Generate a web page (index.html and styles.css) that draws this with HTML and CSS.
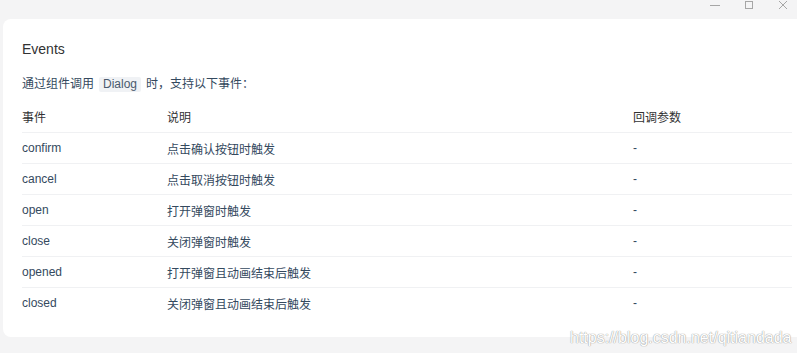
FILE: index.html
```html
<!DOCTYPE html>
<html lang="zh-CN">
<head>
<meta charset="utf-8">
<link rel="stylesheet" href="styles.css">
</head>
<body>
<div class="titlebar">
  <svg class="win-icon" width="10" height="10" viewBox="0 0 10 10"><line x1="0" y1="5.5" x2="10" y2="5.5" stroke="#a6a6a6" stroke-width="1"/></svg>
  <svg class="win-icon" width="10" height="10" viewBox="0 0 10 10"><rect x="1.5" y="1.5" width="7" height="7" fill="none" stroke="#a6a6a6" stroke-width="1"/></svg>
  <svg class="win-icon" width="10" height="10" viewBox="0 0 10 10"><path d="M1 1L9 9M9 1L1 9" stroke="#a6a6a6" stroke-width="1"/></svg>
</div>
<div class="card">
  <h3 class="title">Events</h3>
  <p class="desc">通过组件调用<code class="chip">Dialog</code>时，支持以下事件：</p>
  <div class="table">
    <div class="row head"><div>事件</div><div>说明</div><div>回调参数</div></div>
    <div class="row"><div>confirm</div><div>点击确认按钮时触发</div><div>-</div></div>
    <div class="row"><div>cancel</div><div>点击取消按钮时触发</div><div>-</div></div>
    <div class="row"><div>open</div><div>打开弹窗时触发</div><div>-</div></div>
    <div class="row"><div>close</div><div>关闭弹窗时触发</div><div>-</div></div>
    <div class="row"><div>opened</div><div>打开弹窗且动画结束后触发</div><div>-</div></div>
    <div class="row last"><div>closed</div><div>关闭弹窗且动画结束后触发</div><div>-</div></div>
  </div>
</div>
<div class="watermark">https://blog.csdn.net/qitiandada</div>
</body>
</html>
```
FILE: styles.css
```css
html, body {
  margin: 0;
  padding: 0;
}
body {
  width: 797px;
  height: 353px;
  overflow: hidden;
  background: #f4f4f5;
  font-family: "Liberation Sans", Arial, "Noto Sans CJK SC", sans-serif;
  color: #34495e;
  position: relative;
}
.titlebar {
  height: 19px;
  display: flex;
  justify-content: flex-end;
  align-items: flex-start;
  gap: 24px;
  padding-right: 9px;
  box-sizing: border-box;
}
.win-icon {
  display: block;
}
.card {
  margin-left: 3px;
  background: #fff;
  border-radius: 8px 0 0 8px;
  padding: 19px 5px 19px 19px;
}
.title {
  margin: 0;
  font-size: 14px;
  line-height: 22px;
  font-weight: normal;
  color: #323233;
}
.desc {
  margin: 14px 0 0;
  font-size: 12px;
  line-height: 20px;
  color: #34495e;
}
.chip {
  display: inline-block;
  font-family: "Liberation Sans", Arial, sans-serif;
  font-size: 12px;
  line-height: 15px;
  padding: 0 4px;
  margin: 0 5px;
  background: #f0f2f5;
  border-radius: 2px;
  color: #4a5a6e;
}
.table {
  margin-top: 7px;
  font-size: 12px;
}
.row {
  display: grid;
  grid-template-columns: 145px 466px 1fr;
  height: 30px;
  align-items: center;
  border-bottom: 1px solid #f0f1f3;
  color: #34495e;
}
.row.head {
  height: 31px;
  color: #323233;
}
.row.last {
  border-bottom: none;
}
.watermark {
  position: absolute;
  left: 570px;
  top: 329px;
  font-size: 16px;
  line-height: 18px;
  color: #ffffff;
  text-shadow: 0 0 1px #9a9a9a, 0 0 1px #9a9a9a;
  white-space: nowrap;
}
```
